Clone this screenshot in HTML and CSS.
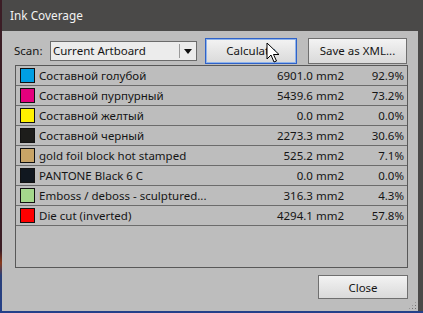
FILE: index.html
```html
<!DOCTYPE html>
<html lang="ru">
<head>
  <meta charset="UTF-8">
  <title>Ink Coverage</title>
  <link rel="stylesheet" href="styles.css">
</head>
<body>
  <div class="window">
    <div class="title-bar">Ink Coverage</div>
    <div class="client">
      <div class="toolbar">
        <label class="scan-label">Scan:</label>
        <div class="select">
          <span class="select-text">Current Artboard</span>
          <span class="select-arrow"></span>
        </div>
        <button class="btn btn-focus btn-calc">Calculate</button>
        <button class="btn btn-xml">Save as XML...</button>
      </div>

      <ul class="ink-list">
        <li><span class="swatch" style="background:#009fe3"></span><span class="name">Составной голубой</span><span class="area">6901.0 mm2</span><span class="pct">92.9%</span></li>
        <li><span class="swatch" style="background:#e5007d"></span><span class="name">Составной пурпурный</span><span class="area">5439.6 mm2</span><span class="pct">73.2%</span></li>
        <li><span class="swatch" style="background:#fff200"></span><span class="name">Составной желтый</span><span class="area">0.0 mm2</span><span class="pct">0.0%</span></li>
        <li><span class="swatch" style="background:#1d1d1b"></span><span class="name">Составной черный</span><span class="area">2273.3 mm2</span><span class="pct">30.6%</span></li>
        <li><span class="swatch" style="background:#c8a466"></span><span class="name">gold foil block hot stamped</span><span class="area">525.2 mm2</span><span class="pct">7.1%</span></li>
        <li><span class="swatch" style="background:#111820"></span><span class="name">PANTONE Black 6 C</span><span class="area">0.0 mm2</span><span class="pct">0.0%</span></li>
        <li><span class="swatch" style="background:#a4d88c"></span><span class="name">Emboss / deboss - sculptured...</span><span class="area">316.3 mm2</span><span class="pct">4.3%</span></li>
        <li><span class="swatch" style="background:#ff0000"></span><span class="name">Die cut (inverted)</span><span class="area">4294.1 mm2</span><span class="pct">57.8%</span></li>
      </ul>

      <div class="footer">
        <button class="btn btn-close">Close</button>
      </div>
      <div class="grip"></div>
    </div>
  </div>

  <svg class="cursor" width="14" height="22" viewBox="0 0 14 22">
    <path d="M1 1 L1 17 L5 13 L8 20 L10.5 19 L7.5 12.5 L13 12.5 Z" fill="#fff" stroke="#000" stroke-width="1"/>
  </svg>
</body>
</html>
```

FILE: styles.css
```css
body {
  margin: 0;
  width: 423px;
  height: 313px;
  overflow: hidden;
  background: linear-gradient(#3b1d25 0%, #3b1d25 80%, #8a3a1c 84%, #2a3f78 88%, #24408a 100%);
  font-family: "Noto Sans", "Open Sans", sans-serif;
  font-size: 11.5px;
  color: #151515;
  position: relative;
}
.window {
  margin-left: 2px;
  width: 421px;
  height: 311px;
  background: #4a4948;
  display: flex;
  flex-direction: column;
}
.title-bar {
  height: 31px;
  line-height: 30px;
  padding-left: 8px;
  color: #f2f2f2;
  font-size: 11.8px;
}
.client {
  position: relative;
  flex: 1;
  margin-right: 5px;
  background: #bdbdbd;
  padding: 6px 11px 0 13px;
}
.toolbar {
  display: flex;
  align-items: center;
  height: 27px;
}
.scan-label {
  margin-left: -1px;
  width: 36px;
}
.select {
  width: 145px;
  height: 18px;
  border: 1px solid #6b6b6b;
  background: #ececec;
  display: flex;
  align-items: center;
}
.select-text {
  flex: 1;
  padding-left: 2px;
}
.select-arrow {
  width: 16px;
  height: 14px;
  border-left: 1px solid #9a9a9a;
  position: relative;
}
.select-arrow::after {
  content: "";
  position: absolute;
  left: 4px;
  top: 5px;
  border-left: 4px solid transparent;
  border-right: 4px solid transparent;
  border-top: 5px solid #111;
}
.btn {
  font-family: inherit;
  font-size: 11.5px;
  color: #151515;
  background: linear-gradient(#f3f3f3, #e6e6e6 50%, #dadada);
  border: 1px solid #6f6f6f;
  padding: 0;
  height: 26px;
}
.btn-calc {
  margin-left: 8px;
  width: 92px;
}
.btn-focus {
  border-color: #2f62c8;
  box-shadow: inset 0 0 0 1px #8fb3ea;
}
.btn-xml {
  margin-left: 11px;
  width: 99px;
}
.ink-list {
  list-style: none;
  margin: 1px 0 0 0;
  padding: 0;
  width: 391px;
  height: 201px;
  border: 1px solid #585858;
}
.ink-list li {
  display: grid;
  grid-template-columns: 15px 1fr 110px 56px;
  align-items: center;
  column-gap: 4px;
  height: 19px;
  padding: 0 3px 0 4px;
  border-bottom: 1px solid #6c6c6c;
}
.swatch {
  width: 13px;
  height: 13px;
  border: 1px solid #111;
}
.name {
  white-space: nowrap;
  overflow: hidden;
}
.area, .pct {
  text-align: right;
}
.footer {
  display: flex;
  justify-content: flex-end;
  padding-top: 7px;
  width: 393px;
}
.btn-close {
  width: 90px;
  height: 24px;
}
.grip {
  position: absolute;
  right: 1px;
  bottom: 1px;
  width: 9px;
  height: 9px;
  background: radial-gradient(circle, #707070 0.6px, transparent 1px) 0 0 / 3px 3px;
  clip-path: polygon(100% 0, 100% 100%, 0 100%);
}
.cursor {
  position: absolute;
  left: 266px;
  top: 42px;
}
```
